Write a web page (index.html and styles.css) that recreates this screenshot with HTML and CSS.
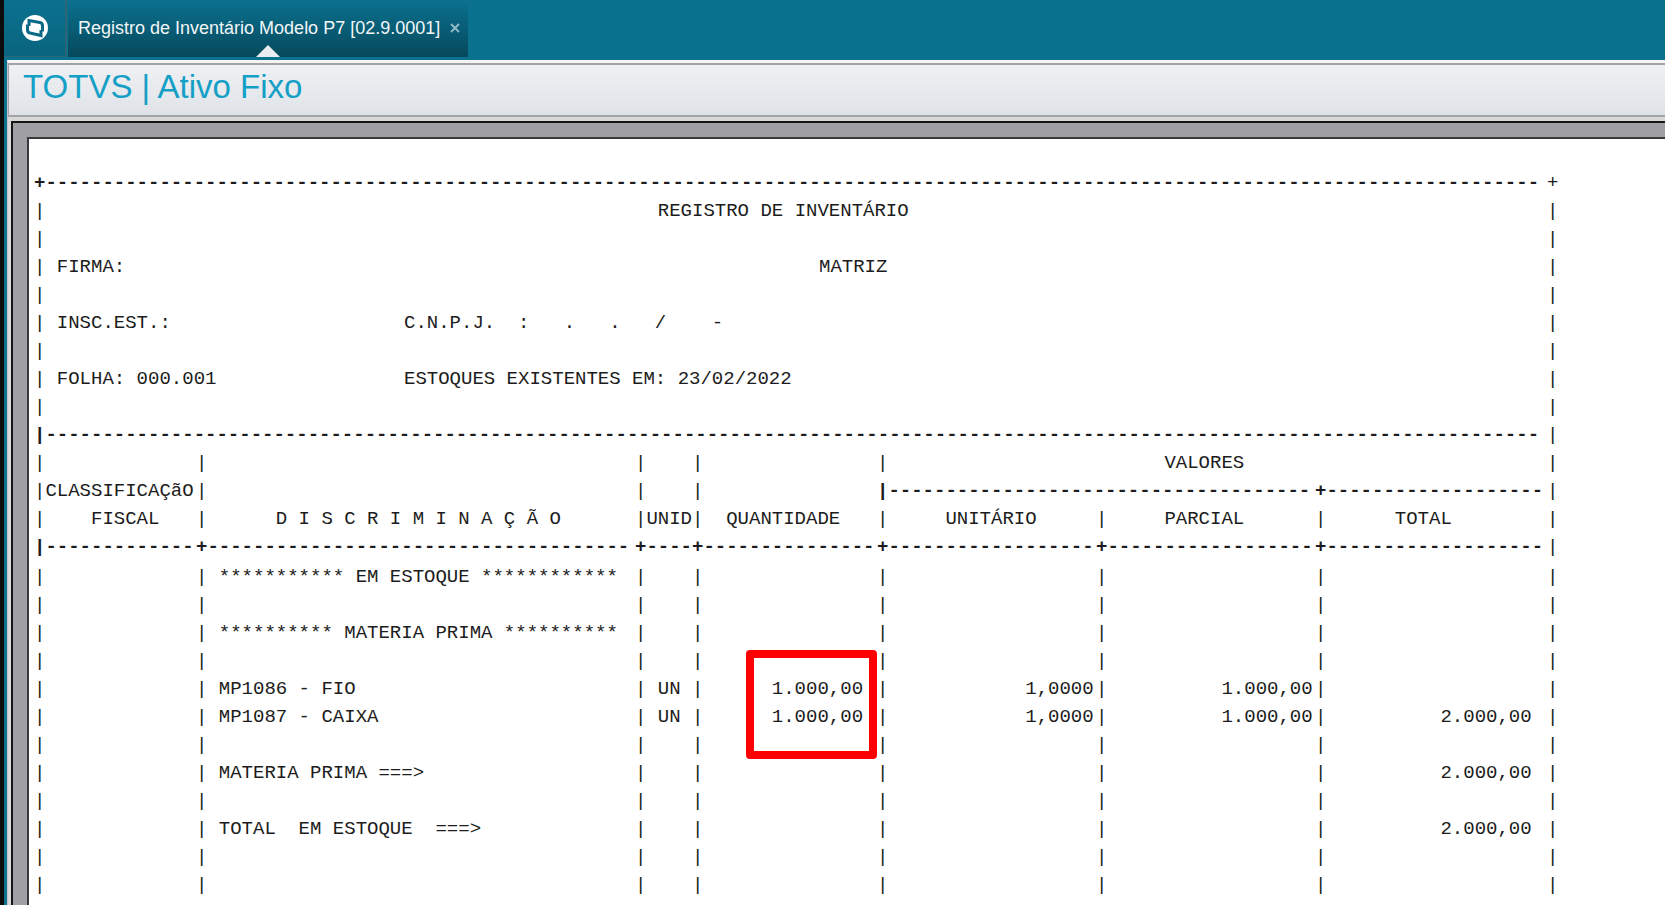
FILE: index.html
```
<!DOCTYPE html>
<html lang="pt-BR">
<head>
  <meta charset="UTF-8" />
  <title>Registro de Inventário Modelo P7</title>
  <link rel="stylesheet" href="styles.css">
</head>
<body>

<header class="topbar">
  <button class="home" aria-label="TOTVS">
    <svg width="28" height="28" viewBox="0 0 28 28">
      <circle cx="14" cy="14" r="13" fill="#fff" />
      <path d="M8 12 V6.5 L19 8.5 Q21.5 9 21.5 11.5 V17.5" fill="none" stroke="#0a6a86" stroke-width="3" />
      <path d="M6.5 10.5 V16 Q6.5 18.5 9 19 L20 21.5 V16" fill="none" stroke="#0a6a86" stroke-width="3" />
      <path d="M10 10.5 L18 12 V17.5 L10 16 Z" fill="#fff" />
    </svg>
  </button>
  <div class="tab">
    <a href="#report">Registro de Inventário Modelo P7 [02.9.0001]</a>
    <button class="tab-close" aria-label="Fechar">
      <svg width="10" height="10" viewBox="0 0 10 10"><path d="M1 1 L9 9 M9 1 L1 9" stroke="#8fb9c6" stroke-width="2" /></svg>
    </button>
  </div>
</header>

<main class="window">
  <h1>TOTVS | Ativo Fixo</h1>

  <div class="viewer">
    <div class="sheet">
      <table id="report" class="report">
        <colgroup>
          <col class="c-class"><col class="c-desc"><col class="c-unit"><col class="c-qty">
          <col class="c-value"><col class="c-value"><col class="c-total"><col class="c-end">
        </colgroup>

        <!-- Report header -->
        <tbody>
          <tr class="rule"><td colspan="7">+-----------------------------------------------------------------------------------------------------------------------------------</td><td>+</td></tr>
          <tr><td>|</td><td></td><td colspan="5">  REGISTRO DE INVENTÁRIO</td><td>|</td></tr>
          <tr><td>|</td><td colspan="6"></td><td>|</td></tr>
          <tr><td>| FIRMA:</td><td colspan="2"></td><td colspan="4" class="branch">MATRIZ</td><td>|</td></tr>
          <tr><td>|</td><td colspan="6"></td><td>|</td></tr>
          <tr><td>| INSC.EST.:</td><td colspan="6" class="field">C.N.P.J.  :   .   .   /    -</td><td>|</td></tr>
          <tr><td>|</td><td colspan="6"></td><td>|</td></tr>
          <tr><td>| FOLHA: 000.001</td><td colspan="6" class="field">ESTOQUES EXISTENTES EM: 23/02/2022</td><td>|</td></tr>
          <tr><td>|</td><td colspan="6"></td><td>|</td></tr>
          <tr class="rule"><td colspan="7">|-----------------------------------------------------------------------------------------------------------------------------------</td><td>|</td></tr>
        </tbody>

        <!-- Column titles -->
        <tbody>
          <tr><th>|</th><th>|</th><th>|</th><th>|</th><th>|</th><th colspan="2">      VALORES</th><th>|</th></tr>
          <tr><th>|CLASSIFICAÇãO</th><th>|</th><th>|</th><th>|</th><th class="line" colspan="2">|-------------------------------------</th><th class="line">+-------------------</th><th>|</th></tr>
          <tr><th>|    FISCAL</th><th>|      D I S C R I M I N A Ç Ã O</th><th>|UNID</th><th>|  QUANTIDADE</th><th>|     UNITÁRIO</th><th>|     PARCIAL</th><th>|      TOTAL</th><th>|</th></tr>
          <tr class="rule"><td>|-------------</td><td>+-------------------------------------</td><td>+----</td><td>+---------------</td><td>+------------------</td><td>+------------------</td><td>+-------------------</td><td>|</td></tr>
        </tbody>

        <!-- Items -->
        <tbody class="items">
          <tr><td>|</td><td>| *********** EM ESTOQUE ************</td><td>|</td><td>|</td><td>|</td><td>|</td><td>|</td><td>|</td></tr>
          <tr><td>|</td><td>|</td><td>|</td><td>|</td><td>|</td><td>|</td><td>|</td><td>|</td></tr>
          <tr><td>|</td><td>| ********** MATERIA PRIMA **********</td><td>|</td><td>|</td><td>|</td><td>|</td><td>|</td><td>|</td></tr>
          <tr><td>|</td><td>|</td><td>|</td><td>|</td><td>|</td><td>|</td><td>|</td><td>|</td></tr>
          <tr><td>|</td><td>| MP1086 - FIO</td><td>| UN</td><td class="marked">|      1.000,00<span class="mark"></span></td><td>|            1,0000</td><td>|          1.000,00</td><td>|</td><td>|</td></tr>
          <tr><td>|</td><td>| MP1087 - CAIXA</td><td>| UN</td><td>|      1.000,00</td><td>|            1,0000</td><td>|          1.000,00</td><td>|          2.000,00</td><td>|</td></tr>
          <tr><td>|</td><td>|</td><td>|</td><td>|</td><td>|</td><td>|</td><td>|</td><td>|</td></tr>
          <tr><td>|</td><td>| MATERIA PRIMA ===&gt;</td><td>|</td><td>|</td><td>|</td><td>|</td><td>|          2.000,00</td><td>|</td></tr>
          <tr><td>|</td><td>|</td><td>|</td><td>|</td><td>|</td><td>|</td><td>|</td><td>|</td></tr>
          <tr><td>|</td><td>| TOTAL  EM ESTOQUE  ===&gt;</td><td>|</td><td>|</td><td>|</td><td>|</td><td>|          2.000,00</td><td>|</td></tr>
          <tr><td>|</td><td>|</td><td>|</td><td>|</td><td>|</td><td>|</td><td>|</td><td>|</td></tr>
          <tr><td>|</td><td>|</td><td>|</td><td>|</td><td>|</td><td>|</td><td>|</td><td>|</td></tr>
        </tbody>
      </table>
    </div>
  </div>
</main>

</body>
</html>
```

FILE: styles.css
```
:root {
  --teal: #0a718f;
  --title: #149fc6;
  --ink: #1c1c20;
}

* {
  box-sizing: border-box;
}

body {
  margin: 0;
  min-height: 100vh;
  display: flex;
  flex-direction: column;
  border-left: 4px solid #0c0c0c;
  background: var(--teal);
  font-family: "Liberation Sans", Arial, sans-serif;
  overflow-x: hidden;
}

button {
  padding: 0;
  border: none;
  background: none;
  cursor: pointer;
}

/* Top bar */
.topbar {
  display: flex;
  align-items: flex-start;
  gap: 1px;
  height: 60px;
}

.home {
  width: 63px;
  height: 57px;
  border-right: 2px solid #2b6576;
  border-bottom: 1px solid #2b6576;
  background: linear-gradient(#0a718f, #0a657f);
}

.home svg {
  display: block;
  margin: 0 auto;
}

.tab {
  position: relative;
  display: flex;
  align-items: center;
  gap: 10px;
  height: 57px;
  padding: 0 8px 0 10px;
  background: linear-gradient(#0a718f, #07495c);
}

.tab::after {
  content: "";
  position: absolute;
  bottom: 0;
  left: 50%;
  margin-left: -12px;
  border: 12px solid transparent;
  border-top: none;
  border-bottom-color: #e9edf0;
}

.tab a {
  color: #f2f6f8;
  font-size: 18px;
  text-decoration: none;
}

/* Window */
.window {
  flex: 1;
  display: flex;
  flex-direction: column;
  margin-left: 3px;
  border-top: 3px solid #f4f4f4;
  border-left: 1px solid #c4c4c4;
  background: #d9d9d9;
}

h1 {
  margin: 0;
  height: 54px;
  padding: 3px 14px;
  border: 2px solid #a3a3a3;
  border-left-width: 1px;
  border-right: none;
  background: linear-gradient(#eff0f3, #dfe3e8);
  color: var(--title);
  font-size: 33px;
  line-height: 38px;
  font-weight: normal;
}

.viewer {
  flex: 1;
  display: flex;
  margin: 4px 0 0 3px;
  padding: 14px 0 0 14px;
  border: 2px solid #161616;
  border-right: none;
  border-bottom: none;
  background: #a09fa4;
}

.sheet {
  flex: 1;
  padding: 30px 0 0 5px;
  border: 2px solid #3a3a3c;
  border-right: none;
  border-bottom: none;
  background: #fff;
}

/* Report */
.report {
  table-layout: fixed;
  width: 1525px;
  border-collapse: collapse;
  color: var(--ink);
  font-family: "Liberation Mono", "Courier New", monospace;
  font-size: 19px;
  line-height: 28px;
}

.report th,
.report td {
  height: 28px;
  padding: 0;
  font-weight: normal;
  text-align: left;
  white-space: pre;
}

.report .rule td,
.report .line {
  font-weight: bold;
}

.report .rule td:last-child {
  font-weight: normal;
}

.items tr:first-child td {
  padding-top: 2px;
}

.c-class { width: 162px; }
.c-desc { width: 439px; }
.c-unit { width: 57px; }
.c-qty { width: 185px; }
.c-value { width: 219px; }
.c-total { width: 232px; }
.c-end { width: 12px; }

.report .field {
  padding-left: 208px;
}

.report .branch {
  padding-left: 127px;
}

.marked {
  position: relative;
}

.mark {
  position: absolute;
  top: -25px;
  left: 54px;
  width: 131px;
  height: 109px;
  border: 8px solid #f00;
  border-radius: 4px;
}
```
